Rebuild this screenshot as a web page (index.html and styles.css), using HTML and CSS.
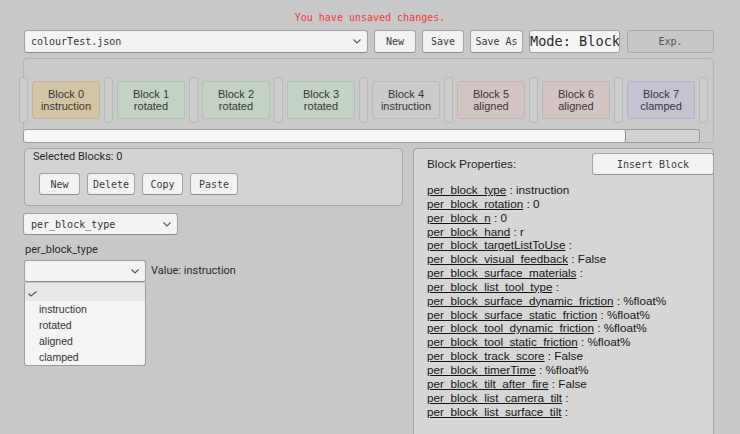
FILE: index.html
```html
<!DOCTYPE html>
<html>
<head>
<meta charset="utf-8">
<link rel="stylesheet" href="styles.css">
</head>
<body>
<div class="app">
  <div class="msg">You have unsaved changes.</div>
  <div class="toolbar">
    <div class="field drop file"><span>colourTest.json</span><svg class="chev" width="8" height="5" viewBox="0 0 8 5"><polyline points="0.5,0.5 4,4 7.5,0.5"/></svg></div>
    <button class="btn w-new">New</button>
    <button class="btn w-save">Save</button>
    <button class="btn w-saveas">Save As</button>
    <div class="mode">Mode: Block</div>
    <button class="btn exp">Exp.</button>
  </div>
  <div class="strip">
    <div class="blocks">
      <div class="sep"></div>
      <div class="block c-tan">Block 0<br>instruction</div>
      <div class="sep"></div>
      <div class="block c-green">Block 1<br>rotated</div>
      <div class="sep"></div>
      <div class="block c-green">Block 2<br>rotated</div>
      <div class="sep"></div>
      <div class="block c-green">Block 3<br>rotated</div>
      <div class="sep"></div>
      <div class="block c-gray">Block 4<br>instruction</div>
      <div class="sep"></div>
      <div class="block c-pink">Block 5<br>aligned</div>
      <div class="sep"></div>
      <div class="block c-pink">Block 6<br>aligned</div>
      <div class="sep"></div>
      <div class="block c-blue">Block 7<br>clamped</div>
      <div class="sep"></div>
    </div>
    <div class="scrollbar"><div class="thumb"></div></div>
  </div>
  <div class="main">
    <div class="left">
      <div class="sel-panel">
        <div class="sel-label">Selected Blocks: 0</div>
        <div class="sel-btns">
          <button class="btn b-new">New</button>
          <button class="btn b-del">Delete</button>
          <button class="btn b-copy">Copy</button>
          <button class="btn b-paste">Paste</button>
        </div>
      </div>
      <div class="field drop prop-drop"><span>per_block_type</span><svg class="chev" width="8" height="5" viewBox="0 0 8 5"><polyline points="0.5,0.5 4,4 7.5,0.5"/></svg></div>
      <div class="lbl">per_block_type</div>
      <div class="value-row">
        <div class="enum-wrap">
          <div class="field drop enum"><span></span><svg class="chev" width="8" height="5" viewBox="0 0 8 5"><polyline points="0.5,0.5 4,4 7.5,0.5"/></svg></div>
          <div class="popup">
            <div class="opt sel"><svg class="check" width="9" height="6" viewBox="0 0 9 6"><polyline points="0.5,2.5 3,5 8.5,0.5"/></svg></div>
            <div class="opt">instruction</div>
            <div class="opt">rotated</div>
            <div class="opt">aligned</div>
            <div class="opt">clamped</div>
          </div>
        </div>
        <span class="value">Value: instruction</span>
      </div>
    </div>
    <div class="right">
      <div class="right-head">
        <div class="title">Block Properties:</div>
        <button class="btn insert">Insert Block</button>
      </div>
      <div class="props">
        <div><u>per_block_type</u> : instruction</div>
        <div><u>per_block_rotation</u> : 0</div>
        <div><u>per_block_n</u> : 0</div>
        <div><u>per_block_hand</u> : r</div>
        <div><u>per_block_targetListToUse</u> :</div>
        <div><u>per_block_visual_feedback</u> : False</div>
        <div><u>per_block_surface_materials</u> :</div>
        <div><u>per_block_list_tool_type</u> :</div>
        <div><u>per_block_surface_dynamic_friction</u> : %float%</div>
        <div><u>per_block_surface_static_friction</u> : %float%</div>
        <div><u>per_block_tool_dynamic_friction</u> : %float%</div>
        <div><u>per_block_tool_static_friction</u> : %float%</div>
        <div><u>per_block_track_score</u> : False</div>
        <div><u>per_block_timerTime</u> : %float%</div>
        <div><u>per_block_tilt_after_fire</u> : False</div>
        <div><u>per_block_list_camera_tilt</u> :</div>
        <div><u>per_block_list_surface_tilt</u> :</div>
      </div>
    </div>
  </div>
</div>
</body>
</html>
```

FILE: styles.css
```css
* { box-sizing: border-box; }
html, body { margin: 0; padding: 0; }
body {
  width: 740px;
  height: 434px;
  overflow: hidden;
  background: #c8c8c8;
  font-family: "Liberation Sans", Arial, sans-serif;
  color: #222;
}
.app { display: flex; flex-direction: column; }

.msg {
  height: 30px;
  padding-top: 11px;
  font-family: "DejaVu Sans Mono", monospace;
  font-size: 10px;
  line-height: 14px;
  color: #f23a3a;
  text-align: center;
}

.toolbar {
  display: flex;
  height: 23px;
  margin-left: 24px;
  gap: 6px;
}

.field {
  background: #f3f3f3;
  border: 1px solid #a0a0a0;
  border-bottom-color: #8c8c8c;
  border-radius: 3px;
  font-family: "DejaVu Sans Mono", monospace;
  font-size: 10px;
  color: #333;
}
.drop {
  display: flex;
  align-items: center;
  justify-content: space-between;
  padding: 0 6px 0 6px;
}
.chev { fill: none; stroke: #555; stroke-width: 1.1; }
.file { width: 344px; height: 23px; }

.btn {
  font-family: "DejaVu Sans Mono", monospace;
  font-size: 10px;
  color: #3a3a3a;
  background: #f2f2f2;
  border: 1px solid #a3a3a3;
  border-bottom-color: #8e8e8e;
  border-radius: 3px;
  padding: 0;
  margin: 0;
  height: 23px;
}
.w-new { width: 42px; }
.w-save { width: 42px; }
.w-saveas { width: 53px; }
.mode {
  width: 91px;
  height: 23px;
  background: #f6f6f6;
  border: 1px solid #a0a0a0;
  border-radius: 3px;
  font-family: "DejaVu Sans Mono", monospace;
  font-size: 13.6px;
  line-height: 21px;
  color: #2a2a2a;
  white-space: nowrap;
  overflow: hidden;
  padding-left: 0;
}
.exp {
  width: 87px;
  margin-left: 1px;
  background: #c6c6c6;
  border-color: #a8a8a8;
  color: #555;
}

.strip {
  margin-top: 5px;
  margin-left: 23px;
  width: 691px;
  border: 1px solid #b4b4b4;
  border-radius: 4px;
  background: #cacaca;
  padding-top: 18px;
}
.blocks {
  display: flex;
  align-items: center;
  gap: 4px;
  height: 46px;
  margin-left: -5px;
}
.sep {
  width: 9px;
  height: 46px;
  background: #cdcdcd;
  border: 1px solid #b9b9b9;
  border-radius: 3px;
  flex: none;
}
.block {
  width: 68px;
  height: 38px;
  flex: none;
  border: 1px solid #bbb;
  border-radius: 3px;
  display: flex;
  flex-direction: column;
  align-items: center;
  justify-content: center;
  text-align: center;
  font-size: 11px;
  line-height: 12.4px;
  color: #363636;
}
.c-tan { background: #d3c4a4; border-color: #c3b594; }
.c-green { background: #c3d3c3; border-color: #b3c3b3; }
.c-gray { background: #cbcbcb; border-color: #bcbcbc; }
.c-pink { background: #d3c3c3; border-color: #c3b3b3; }
.c-blue { background: #c3c3d4; border-color: #b3b3c4; }

.scrollbar {
  margin-top: 6px;
  margin-left: -1px;
  margin-bottom: -1px;
  width: 677px;
  height: 14px;
  background: #d2d2d2;
  border: 1px solid #9a9a9a;
  border-radius: 3px;
  overflow: hidden;
}
.thumb {
  width: 602px;
  height: 100%;
  background: #f6f6f6;
  border-right: 1px solid #8a8a8a;
  border-radius: 2px;
}

.main {
  display: flex;
  margin-top: 5px;
  margin-left: 24px;
  gap: 10px;
}
.left { width: 379px; display: flex; flex-direction: column; }

.sel-panel {
  height: 58px;
  background: #d3d3d3;
  border: 1px solid #a8a8a8;
  border-radius: 4px;
  padding: 1px 0 0 8px;
}
.sel-label, .lbl, .value {
  font-family: Roboto, "Liberation Sans", sans-serif;
  font-size: 11px;
  line-height: 14px;
  color: #2a2a2a;
}
.sel-btns {
  display: flex;
  gap: 7px;
  margin-top: 9px;
  margin-left: 6px;
}
.sel-btns .btn { height: 22px; }
.b-new { width: 41px; }
.b-del { width: 48px; }
.b-copy { width: 41px; }
.b-paste { width: 48px; }

.prop-drop {
  margin-top: 7px;
  margin-left: -1px;
  width: 155px;
  height: 22px;
  padding-left: 7px;
}
.lbl { margin-top: 8px; margin-left: 1px; }
.value-row {
  display: flex;
  align-items: center;
  gap: 5px;
  margin-top: 3px;
}
.enum-wrap { position: relative; }
.enum { width: 122px; height: 22px; }
.popup {
  position: absolute;
  left: 0;
  top: 22px;
  width: 122px;
  height: 84px;
  background: #f4f4f4;
  border: 1px solid #9c9c9c;
  border-top-color: #c8c8c8;
  border-radius: 0 0 3px 3px;
  font-size: 10.5px;
  color: #333;
}
.opt {
  height: 16px;
  line-height: 16px;
  padding-left: 14px;
}
.opt.sel {
  height: 18px;
  background: #e7e7e7;
  padding-left: 3px;
  display: flex;
  align-items: center;
}
.check { fill: none; stroke: #555; stroke-width: 1.1; margin-top: 3px; }

.right {
  width: 301px;
  height: 300px;
  background: #d6d6d6;
  border: 1px solid #a2a2a2;
  border-radius: 4px;
  padding: 4px 0 0 13px;
}
.right-head {
  display: flex;
  align-items: center;
  justify-content: space-between;
}
.title { font-size: 11.8px; color: #1e1e1e; }
.insert {
  width: 122px;
  height: 22px;
  margin-right: -1px;
}
.props {
  margin-top: 8px;
  font-size: 11.7px;
  line-height: 13.85px;
  color: #151515;
}
.props u { text-underline-offset: 1px; }
```
